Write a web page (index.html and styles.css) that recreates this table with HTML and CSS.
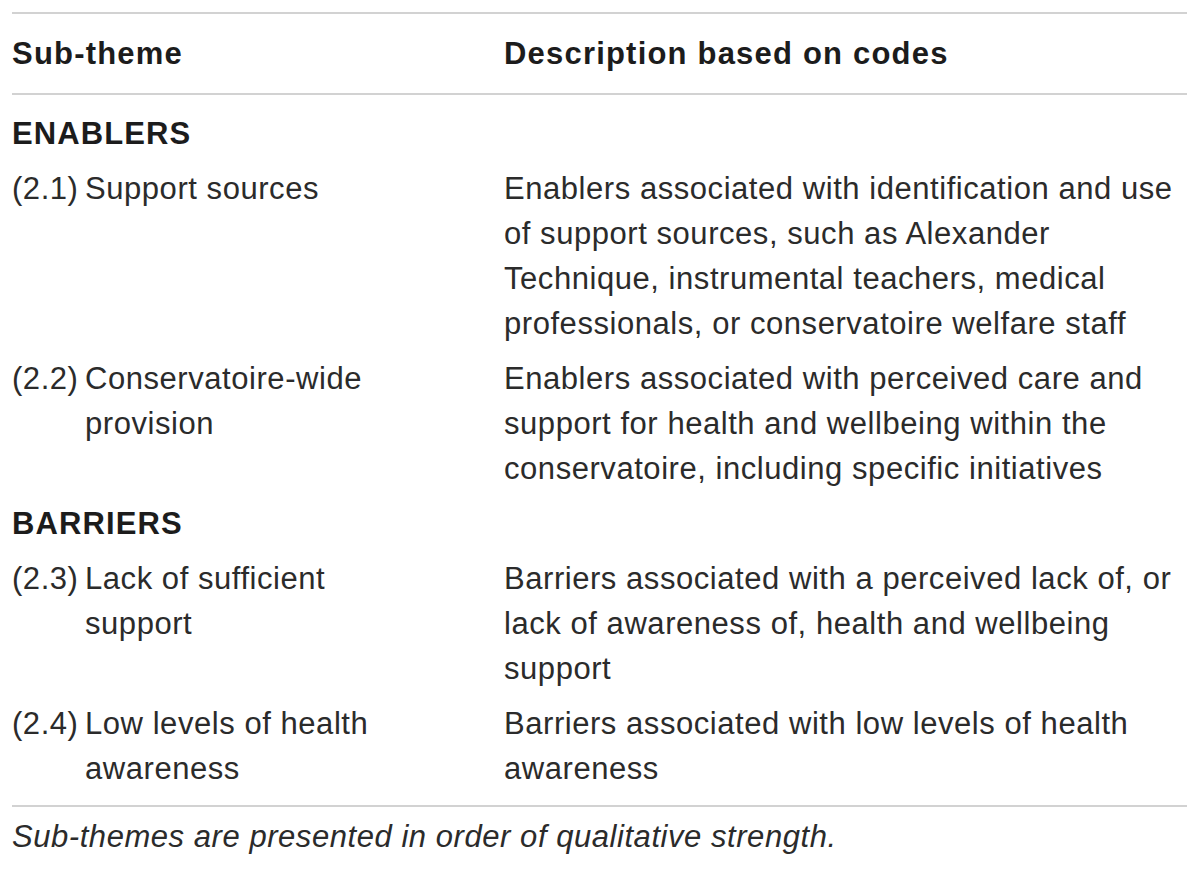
FILE: index.html
```html
<!DOCTYPE html>
<html lang="en">
<head>
<meta charset="utf-8">
<title>Sub-themes</title>
<link rel="stylesheet" href="styles.css">
</head>
<body>
<div class="wrap">
  <table class="themes">
    <colgroup>
      <col class="c1">
      <col class="c2">
    </colgroup>
    <thead>
      <tr><th>Sub-theme</th><th>Description based on codes</th></tr>
    </thead>
    <tbody>
      <tr class="first"><td class="group" colspan="2">ENABLERS</td></tr>
      <tr>
        <td><div class="item"><span class="num">(2.1)</span><span class="name">Support sources</span></div></td>
        <td>Enablers associated with identification and use<br>of support sources, such as Alexander<br>Technique, instrumental teachers, medical<br>professionals, or conservatoire welfare staff</td>
      </tr>
      <tr>
        <td><div class="item"><span class="num">(2.2)</span><span class="name">Conservatoire-wide<br>provision</span></div></td>
        <td>Enablers associated with perceived care and<br>support for health and wellbeing within the<br>conservatoire, including specific initiatives</td>
      </tr>
      <tr><td class="group" colspan="2">BARRIERS</td></tr>
      <tr>
        <td><div class="item"><span class="num">(2.3)</span><span class="name">Lack of sufficient<br>support</span></div></td>
        <td>Barriers associated with a perceived lack of, or<br>lack of awareness of, health and wellbeing<br>support</td>
      </tr>
      <tr class="last">
        <td><div class="item"><span class="num">(2.4)</span><span class="name">Low levels of health<br>awareness</span></div></td>
        <td>Barriers associated with low levels of health<br>awareness</td>
      </tr>
    </tbody>
  </table>
  <p class="note">Sub-themes are presented in order of qualitative strength.</p>
</div>
</body>
</html>
```

FILE: styles.css
```css
html, body {
  margin: 0;
  padding: 0;
  background: #ffffff;
}

body {
  font-family: "Liberation Sans", Arial, sans-serif;
  color: #2b2b2b;
  font-size: 31px;
  letter-spacing: 0.55px;
}

.wrap {
  padding: 12px 13px 0 12px;
}

.themes {
  width: 1175px;
  border-collapse: collapse;
  border-top: 2px solid #d2d2d2;
  border-bottom: 2px solid #d2d2d2;
}

.c1 { width: 492px; }

.themes th {
  text-align: left;
  font-weight: bold;
  letter-spacing: 1.2px;
  line-height: 45px;
  padding: 17px 0 17px 0;
  border-bottom: 2px solid #d2d2d2;
  color: #1c1c1c;
}

.themes td {
  vertical-align: top;
  line-height: 45px;
  padding: 5px 0;
}

.themes tr.first td { padding-top: 16px; }
.themes tr.last td { padding-bottom: 14px; }

.themes td.group {
  font-weight: bold;
  letter-spacing: 1.1px;
  color: #1c1c1c;
}

.item {
  display: flex;
}

.num {
  flex: 0 0 73px;
}

.note {
  margin: 7px 0 0 0;
  font-style: italic;
  line-height: 45px;
}
```
